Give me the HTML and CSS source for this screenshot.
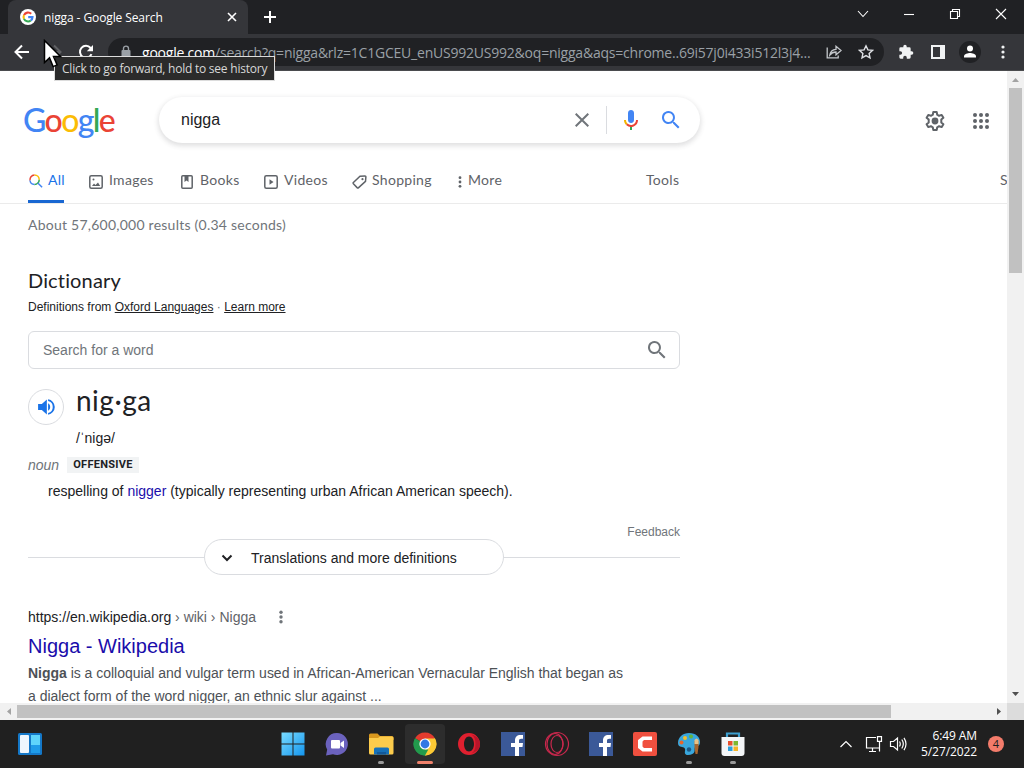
FILE: index.html
```html
<!DOCTYPE html>
<html lang="en">
<head>
  <meta charset="UTF-8">
  <meta name="viewport" content="width=device-width, initial-scale=1.0">
  <title>nigga - Google Search</title>
  <link rel="stylesheet" href="styles.css">
</head>
<body>
  <div class="tabstrip">
    <div class="tab">
      <svg class="favicon" width="16" height="16" viewBox="0 0 16 16" fill="none" stroke-width="2.1">
        <circle cx="8" cy="8" r="8" fill="#fff"/>
        <path d="M4 6.1A4.5 4.5 0 0 1 11.2 4.8" stroke="#ea4335"/>
        <path d="M4 6.1A4.5 4.5 0 0 0 4 9.9" stroke="#fbbc05"/>
        <path d="M4 9.9A4.5 4.5 0 0 0 10.8 11.5" stroke="#34a853"/>
        <path d="M10.8 11.5A4.5 4.5 0 0 0 12.5 8.1H8.2" stroke="#4285f4"/>
      </svg>
      <span class="tab-title">nigga - Google Search</span>
      <svg class="tab-close" width="10" height="10" viewBox="0 0 10 10" stroke="#fff" stroke-width="1.6"><path d="M1 1l8 8M9 1L1 9"/></svg>
    </div>
    <svg class="new-tab" width="12" height="12" viewBox="0 0 12 12" stroke="#fff" stroke-width="2"><path d="M6 0v12M0 6h12"/></svg>
    <div class="window-buttons">
      <svg width="12" height="12" viewBox="0 0 12 12"><path d="M1 3l5 5.5L11 3"/></svg>
      <svg width="12" height="12" viewBox="0 0 12 12"><path d="M1 6.5h10"/></svg>
      <svg width="12" height="12" viewBox="0 0 12 12"><path d="M1.5 3.5h7v7h-7zM3.5 3.5v-2h7v7h-2"/></svg>
      <svg width="12" height="12" viewBox="0 0 12 12"><path d="M1 1l10 10M11 1L1 11"/></svg>
    </div>
  </div>

  <div class="toolbar">
    <svg class="nav-back" width="16" height="16" viewBox="0 0 16 16" fill="none" stroke="#fff" stroke-width="2"><path d="M15 8H2M8 1.5L1.5 8 8 14.500"/></svg>
    <svg class="nav-forward" width="16" height="16" viewBox="0 0 16 16" fill="none" stroke="#606164" stroke-width="2"><path d="M1 8h13M8 1.500L14.500 8 8 14.500"/></svg>
    <svg class="nav-reload" width="16" height="16" viewBox="0 0 16 16" fill="none" stroke="#fff" stroke-width="2"><path d="M13.500 10.200A6 6 0 1 1 12.600 4L14 5.600"/><path d="M15 1v6.200H8.800z" fill="#fff" stroke="none"/></svg>
    <div class="omnibox">
      <svg class="lock" width="10" height="14" viewBox="0 0 10 14"><rect x="0.500" y="5" width="9" height="8" rx="1" fill="#9aa0a6"/><path d="M2.500 6V3.600a2.500 2.500 0 0 1 5 0V6" fill="none" stroke="#9aa0a6" stroke-width="1.400"/></svg>
      <span class="url"><span class="host">google.com</span>/search?q=nigga&amp;rlz=1C1GCEU_enUS992US992&amp;oq=nigga&amp;aqs=chrome..69i57j0i433i512l3j4...</span>
      <svg class="share" width="16" height="14" viewBox="0 0 16 14" fill="none" stroke="#c4c7cb" stroke-width="1.300"><path d="M1.200 2.500v10.300h11V10.500"/><path d="M3.800 10C4.300 6.500 6.500 4.500 10 4.300V1.300L15 5.600l-5 4.200V7C7.300 7 5.500 7.800 3.800 10z"/></svg>
      <svg class="star" width="16" height="16" viewBox="0 0 16 16" fill="none" stroke="#dfe1e5" stroke-width="1.400"><path d="M8 1.800l1.900 4.100 4.500.5-3.300 3 .9 4.400L8 11.600l-4 2.200.9-4.400-3.300-3 4.500-.5z"/></svg>
    </div>
    <svg class="ext" width="16" height="16" viewBox="0 0 24 24" fill="#f1f3f4"><path d="M20.500 11H19V7a2 2 0 0 0-2-2h-4V3.500a2.500 2.500 0 0 0-5 0V5H4a2 2 0 0 0-2 2v3.800h1.500a2.700 2.700 0 0 1 0 5.400H2V20a2 2 0 0 0 2 2h3.800v-1.500a2.700 2.700 0 0 1 5.400 0V22H17a2 2 0 0 0 2-2v-4h1.500a2.500 2.500 0 0 0 0-5z"/></svg>
    <svg class="panel" width="14" height="14" viewBox="0 0 14 14"><path fill="#f1f3f4" fill-rule="evenodd" d="M0 0h14v14H0zM2 2v10h7V2z"/></svg>
    <svg class="profile" width="22" height="22" viewBox="0 0 22 22"><circle cx="11" cy="11" r="11" fill="#202124"/><circle cx="11" cy="7.500" r="3" fill="#fff"/><path d="M5 16.500v-1.300c0-2 4-3.200 6-3.200s6 1.200 6 3.200v1.300z" fill="#fff"/></svg>
    <svg class="menu" width="4" height="14" viewBox="0 0 4 14" fill="#f1f3f4"><circle cx="2" cy="2" r="1.600"/><circle cx="2" cy="7" r="1.600"/><circle cx="2" cy="12" r="1.600"/></svg>
  </div>

  <div class="tooltip">Click to go forward, hold to see history</div>
  <svg class="cursor" width="20" height="32" viewBox="0 0 20 32"><path d="M1.500 1.500v22l5-4.600 3.600 8.700 4-1.700-3.600-8.400h7z" fill="#fff" stroke="#000" stroke-width="1.500"/></svg>

  <div class="viewport">
    <div class="page">
      <header class="search-header">
        <div class="logo"><span class="blue">G</span><span class="red">o</span><span class="yellow">o</span><span class="blue">g</span><span class="green">l</span><span class="red">e</span></div>
        <div class="search-box">
          <span class="query">nigga</span>
          <svg class="clear" width="14" height="14" viewBox="0 0 14 14" stroke="#70757a" stroke-width="2"><path d="M.7.7l12.600 12.600M13.300.7L.7 13.300"/></svg>
          <span class="divider"></span>
          <svg class="mic" width="24" height="24" viewBox="0 0 24 24"><path fill="#4285f4" d="M12 15c1.700 0 3-1.300 3-3V5c0-1.700-1.300-3-3-3S9 3.300 9 5v7c0 1.700 1.300 3 3 3z"/><path fill="#34a853" d="M11 18.100h2V22h-2z"/><path fill="#f4b400" d="M7 12H5c0 1.900.8 3.700 2.100 5l1.400-1.400C7.600 14.700 7 13.400 7 12z"/><path fill="#ea4335" d="M12 17c-1.400 0-2.600-.5-3.500-1.400L7.100 17A7 7 0 0 0 19 12h-2c0 2.800-2.200 5-5 5z"/></svg>
          <svg class="go" width="24" height="24" viewBox="0 0 24 24" fill="#4285f4"><path d="M15.500 14h-.8l-.3-.3A6.500 6.500 0 1 0 13.700 14.400l.3.300v.8l5 5 1.500-1.500zm-6 0a4.500 4.500 0 1 1 0-9 4.500 4.500 0 0 1 0 9z"/></svg>
        </div>
        <svg class="gear" width="24" height="24" viewBox="0 0 24 24"><path d="M10.300 3h3.400l.5 2.700 1.900 1.100 2.600-.9 1.700 2.900-2.100 1.800v2.800l2.100 1.800-1.700 2.900-2.600-.9-1.900 1.100-.5 2.700h-3.400l-.5-2.700-1.900-1.100-2.600.9-1.700-2.900 2.100-1.800v-2.800L3.600 8.800l1.700-2.900 2.600.9 1.900-1.100z" fill="none" stroke="#5f6368" stroke-width="2" stroke-linejoin="round"/><circle cx="12" cy="12" r="3.400" fill="#5f6368"/></svg>
        <svg class="apps" width="16" height="16" viewBox="0 0 16 16" fill="#5f6368"><circle cx="2" cy="2" r="2"/><circle cx="8" cy="2" r="2"/><circle cx="14" cy="2" r="2"/><circle cx="2" cy="8" r="2"/><circle cx="8" cy="8" r="2"/><circle cx="14" cy="8" r="2"/><circle cx="2" cy="14" r="2"/><circle cx="8" cy="14" r="2"/><circle cx="14" cy="14" r="2"/></svg>
      </header>

      <nav class="tabs">
        <a class="active">
          <svg width="16" height="16" viewBox="0 0 16 16" fill="none" stroke-width="1.500"><path d="M2 7.500A4.700 4.700 0 0 1 6.500 2" stroke="#ea4335"/><path d="M6.500 2A4.700 4.700 0 0 1 11.200 6.700" stroke="#fbbc05"/><path d="M2 7.500a4.700 4.700 0 0 0 4.500 4" stroke="#4285f4"/><path d="M6.500 11.500a4.700 4.700 0 0 0 4.700-4.800" stroke="#34a853"/><path d="M9.800 10l4.300 4.300" stroke="#4285f4"/></svg>
          <span>All</span>
        </a>
        <a class="t-images">
          <svg width="14" height="14" viewBox="0 0 14 14"><rect x=".8" y=".8" width="12.400" height="12.400" rx="1.500" fill="none" stroke="#5f6368" stroke-width="1.500"/><path d="M3 11l2-2.500 1.500 1.400L9 7.500l2.200 3.500z" fill="#5f6368"/><circle cx="4.500" cy="4.500" r="1" fill="#5f6368"/></svg>
          <span>Images</span>
        </a>
        <a class="t-books">
          <svg width="12" height="14" viewBox="0 0 12 14"><rect x=".8" y=".8" width="10.400" height="12.400" rx="1" fill="none" stroke="#5f6368" stroke-width="1.500"/><path d="M3.500 1h4v6l-2-1.500-2 1.500z" fill="#5f6368"/></svg>
          <span>Books</span>
        </a>
        <a class="t-videos">
          <svg width="14" height="14" viewBox="0 0 14 14"><rect x=".8" y=".8" width="12.400" height="12.400" rx="1.500" fill="none" stroke="#5f6368" stroke-width="1.500"/><path d="M5.500 4.200v5.600L9.500 7z" fill="#5f6368"/></svg>
          <span>Videos</span>
        </a>
        <a class="t-shopping">
          <svg width="15" height="14" viewBox="0 0 15 14"><path d="M8 1.300l5-.4q.9 0 .9.900l-.4 4.500L6.600 12.600q-.8.700-1.500 0L1.400 8.800q-.6-.7 0-1.400z" fill="none" stroke="#5f6368" stroke-width="1.500"/><circle cx="10.500" cy="4.200" r="1.100" fill="#5f6368"/></svg>
          <span>Shopping</span>
        </a>
        <a class="t-more">
          <svg width="4" height="12" viewBox="0 0 4 12" fill="#5f6368"><circle cx="2" cy="1.700" r="1.400"/><circle cx="2" cy="6" r="1.400"/><circle cx="2" cy="10.300" r="1.400"/></svg>
          <span>More</span>
        </a>
        <a class="t-tools">Tools</a>
        <a class="t-safe">S</a>
      </nav>

      <main class="results">
        <div class="stats">About 57,600,000 results (0.34 seconds)</div>

        <section class="dictionary">
          <h2>Dictionary</h2>
          <p class="source">Definitions from <u>Oxford Languages</u> <i>·</i> <u>Learn more</u></p>
          <div class="word-search">
            <span>Search for a word</span>
            <svg width="24" height="24" viewBox="0 0 24 24" fill="#70757a"><path d="M15.500 14h-.8l-.3-.3A6.500 6.500 0 1 0 13.700 14.400l.3.300v.8l5 5 1.500-1.500zm-6 0a4.500 4.500 0 1 1 0-9 4.500 4.500 0 0 1 0 9z"/></svg>
          </div>
          <div class="entry">
            <div class="speaker">
              <svg width="20" height="20" viewBox="0 0 24 24" fill="#1a73e8"><path d="M2.500 8.500v7H7l6 5.500V3L7 8.500z"/><path d="M14.500 7.500v9c1.700-.8 2.500-2.500 2.500-4.500s-.8-3.700-2.500-4.500zM14.500 2.700v2.200a7.300 7.300 0 0 1 0 14.200v2.200a9.400 9.400 0 0 0 0-18.600z"/></svg>
            </div>
            <div>
              <div class="headword">nig·ga</div>
              <div class="phonetic">/ˈniɡə/</div>
            </div>
          </div>
          <div class="pos"><em>noun</em><span class="label">OFFENSIVE</span></div>
          <p class="definition">respelling of <a>nigger</a> (typically representing urban African American speech).</p>
          <div class="feedback">Feedback</div>
          <div class="expand">
            <div class="expand-button">
              <svg width="12" height="8" viewBox="0 0 12 8" fill="none" stroke="#202124" stroke-width="2"><path d="M1.500 1.500L6 6l4.500-4.500"/></svg>
              <span>Translations and more definitions</span>
            </div>
          </div>
        </section>

        <article class="result">
          <div class="cite">
            <div><span>https://en.wikipedia.org</span> › wiki › Nigga</div>
            <svg width="4" height="14" viewBox="0 0 4 14" fill="#70757a"><circle cx="2" cy="2.200" r="1.700"/><circle cx="2" cy="7" r="1.700"/><circle cx="2" cy="11.800" r="1.700"/></svg>
          </div>
          <h3>Nigga - Wikipedia</h3>
          <p class="snippet"><b>Nigga</b> is a colloquial and vulgar term used in African-American Vernacular English that began as<br>a dialect form of the word nigger, an ethnic slur against ...</p>
        </article>
      </main>
    </div>
    <div class="vscroll">
      <svg width="7" height="4" viewBox="0 0 7 4"><path d="M0 4L3.500 0 7 4z" fill="#a3a3a3"/></svg>
      <div class="thumb"></div>
      <svg class="down" width="7" height="4" viewBox="0 0 7 4"><path d="M0 0l3.500 4L7 0z" fill="#505050"/></svg>
    </div>
  </div>

  <div class="hscroll">
    <svg width="4" height="7" viewBox="0 0 4 7"><path d="M4 0L0 3.500 4 7z" fill="#a3a3a3"/></svg>
    <div class="thumb"></div>
    <svg class="right" width="4" height="7" viewBox="0 0 4 7"><path d="M0 0l4 3.500L0 7z" fill="#505050"/></svg>
    <div class="corner"></div>
  </div>

  <footer class="taskbar">
    <svg class="widgets" width="24" height="22" viewBox="0 0 24 22"><rect width="24" height="22" rx="1.500" fill="#1478c8"/><rect x="2" y="2" width="9" height="18" rx="1" fill="#eef6fd"/><rect x="13" y="2" width="9" height="10" fill="#5fd4fb"/><rect x="13" y="12" width="9" height="8" fill="#1f9be8"/></svg>
    <div class="pinned">
      <div class="app">
        <svg width="24" height="24" viewBox="0 0 24 24"><defs><linearGradient id="win" gradientUnits="userSpaceOnUse" x1="0" y1="0" x2="24" y2="24"><stop offset="0" stop-color="#7bdcff"/><stop offset="1" stop-color="#1294ee"/></linearGradient></defs><path d="M.5.5h11v11H.5zM12.500.5h11v11h-11zM.5 12.500h11v11H.5zM12.500 12.500h11v11h-11z" fill="url(#win)"/></svg>
      </div>
      <div class="app">
        <svg width="24" height="24" viewBox="0 0 24 24"><path d="M12 1a11 11 0 1 1-4 21.300L1 23.500l1.200-6A11 11 0 0 1 12 1z" fill="#6b62bd"/><rect x="6" y="8" width="9" height="8.500" rx="1" fill="#fff"/><path d="M15.500 11L19 8.500V16l-3.500-2.500z" fill="#fff"/></svg>
      </div>
      <div class="app open">
        <svg width="26" height="24" viewBox="0 0 26 24"><path d="M1 3q0-1.500 1.500-1.500h7L12 4h12q1.500 0 1.500 1.500V8H1z" fill="#d9981e"/><path d="M1 6h9l2-1.500h12q1.500 0 1.500 1.500v15q0 1.500-1.500 1.500H2.500Q1 22.500 1 21z" fill="#fccc4c"/><path d="M6 22.500V17q0-1.500 1.500-1.500h12Q21 15.500 21 17v5.500z" fill="#1671b9"/><path d="M9 22.500V20h9v2.500z" fill="#12599a"/></svg>
      </div>
      <div class="app current">
        <svg width="24" height="24" viewBox="0 0 24 24"><path d="M12 12L2.100 6.300A11.400 11.400 0 0 1 21.900 6.300z" fill="#e33b2e"/><path d="M12 12l9.900-5.700A11.400 11.400 0 0 1 12 23.400z" fill="#fcc934"/><path d="M12 12v11.400A11.400 11.400 0 0 1 2.100 6.300z" fill="#229a4c"/><path d="M12 6.500h9.900A11.400 11.400 0 0 1 12 23.400l4.800-8.600z" fill="#fcc934"/><path d="M2.100 6.300l5.100 8.500L12 17.500h3.300L12 23.400A11.400 11.400 0 0 1 2.100 6.300z" fill="#229a4c"/><circle cx="12" cy="12" r="5.600" fill="#fff"/><circle cx="12" cy="12" r="4.400" fill="#3478e5"/></svg>
      </div>
      <div class="app">
        <svg width="24" height="24" viewBox="0 0 24 24"><path fill="#e0202f" fill-rule="evenodd" d="M12 1a11 11 0 0 1 0 22 11 11 0 0 1 0-22zm0 3.500c-3 0-5 3.500-5 7.500s2 7.500 5 7.500 5-3.500 5-7.500-2-7.500-5-7.500z"/><path d="M14.500 2.500c6 2 8.500 5.500 8.500 9.500s-2.500 7.500-8.500 9.500c3-2 4-5.500 4-9.500s-1-7.500-4-9.500z" fill="#b8152a"/></svg>
      </div>
      <div class="app">
        <svg width="24" height="24" viewBox="0 0 24 24"><rect width="24" height="24" fill="#3b5998"/><path d="M14 24v-9h-4v-4h4V8.500C14 5 16 3 19.500 3H22v3.800h-1.800c-1.700 0-2.200.7-2.200 2V11h4l-.5 4H18v9z" fill="#fff"/></svg>
      </div>
      <div class="app">
        <svg width="26" height="26" viewBox="0 0 26 26" fill="none" stroke="#c9284d" stroke-width="1.200"><circle cx="13" cy="13" r="11.500"/><ellipse cx="13" cy="13" rx="6" ry="8.500"/><ellipse cx="11" cy="13" rx="8" ry="10.500"/></svg>
      </div>
      <div class="app">
        <svg width="24" height="24" viewBox="0 0 24 24"><rect width="24" height="24" fill="#3b5998"/><path d="M14 24v-9h-4v-4h4V8.500C14 5 16 3 19.500 3H22v3.800h-1.800c-1.700 0-2.200.7-2.200 2V11h4l-.5 4H18v9z" fill="#fff"/></svg>
      </div>
      <div class="app">
        <svg width="24" height="24" viewBox="0 0 24 24"><rect width="24" height="24" rx="2" fill="#f0503f"/><path d="M19 4.500H9.500L5 8v8l4.500 3.500H19V16h-8l-1.500-1.500v-5L11 8h8z" fill="#fff"/></svg>
      </div>
      <div class="app open">
        <svg width="26" height="26" viewBox="0 0 26 26"><path d="M13 2c7 0 11 4 11 9 0 4-2 4-4 4.500s-1 3-1.500 5-3 3.500-6.500 3.500c-3 0-3.500-2-3-4s0-3.500-3-4-4-1.500-4-4C2 6 7 2 13 2z" fill="#39a7dd"/><circle cx="9" cy="7" r="2" fill="#f5c02c"/><circle cx="15" cy="5.500" r="2" fill="#64b43d"/><circle cx="5.500" cy="11.500" r="2" fill="#e7652b"/><circle cx="13" cy="18.500" r="2.200" fill="#1d5783"/><path d="M18.500 10h4v6l-1 7h-2l-1-7z" fill="#a8662e"/><path d="M18.500 9q2-3 4 0v4h-4z" fill="#e7c187"/></svg>
      </div>
      <div class="app open">
        <svg width="24" height="26" viewBox="0 0 24 26"><path d="M6 8V2.500h12V8" fill="none" stroke="#3d9fd0" stroke-width="2.200"/><path d="M.5 6h23v16q0 3-3 3h-17q-3 0-3-3z" fill="#f4f6f8"/><path d="M7 10h4.500v4.500H7z" fill="#e8502e"/><path d="M12.500 10H17v4.500h-4.500z" fill="#7db72f"/><path d="M7 15.500h4.500V20H7z" fill="#2c9fdc"/><path d="M12.500 15.500H17V20h-4.500z" fill="#f5b427"/></svg>
      </div>
    </div>
    <div class="tray">
      <svg width="14" height="8" viewBox="0 0 14 8"><path d="M1.500 7L7 1.500 12.500 7"/></svg>
      <svg class="net" width="18" height="16" viewBox="0 0 18 16"><path d="M11 1.500H1.500v10.500H14M4 15.500h7M7.500 12v3.500M12.500.7h4v4.600h-4zM14.500 5.500v10"/></svg>
      <svg class="vol" width="18" height="16" viewBox="0 0 18 16"><path d="M1.500 5.500h3l4-3.500v12l-4-3.500h-3zM10.500 5.500q1.500 2.500 0 5M12.800 3.500q3 4.500 0 9M15 1.800q4 6.200 0 12.400"/></svg>
      <div class="clock"><div>6:49 AM</div><div>5/27/2022</div></div>
      <div class="badge">4</div>
    </div>
  </footer>
</body>
</html>
```
FILE: styles.css
```css
* {
  box-sizing: border-box;
}
body {
  margin: 0;
  width: 1024px;
  height: 768px;
  overflow: hidden;
  font-family: "Liberation Sans", Arial, sans-serif;
  color: #202124;
  background: #fff;
}
svg {
  flex: none;
  display: block;
}
h2, h3, p {
  margin: 0;
  font-weight: normal;
}

/* browser window */
.tabstrip {
  display: flex;
  height: 34px;
  padding-left: 8px;
  background: #202124;
}
.tab {
  display: flex;
  align-items: center;
  width: 240px;
  height: 34px;
  padding: 0 11px 0 12px;
  border-radius: 8px 8px 0 0;
  background: #35363a;
  color: #fff;
  font: 12px "Open Sans", sans-serif;
}
.tab-title {
  flex: 1;
  margin-left: 8px;
  letter-spacing: -0.1px;
  white-space: nowrap;
}
.new-tab {
  margin: 11px 0 0 16px;
}
.window-buttons {
  display: flex;
  gap: 34px;
  margin: 8px 17px 0 auto;
}
.window-buttons svg {
  fill: none;
  stroke: #fff;
  stroke-width: 1.1;
}
.toolbar {
  display: flex;
  align-items: center;
  height: 37px;
  padding: 0 19px 0 14px;
  background: #35363a;
  border-bottom: 1px solid #4a4b4e;
}
.nav-forward {
  margin-left: 16px;
}
.nav-reload {
  margin-left: 16px;
}
.omnibox {
  display: flex;
  align-items: center;
  width: 776px;
  height: 28px;
  margin-left: 14px;
  padding: 0 10px 0 13px;
  border-radius: 14px;
  background: #202124;
  font: 14px "Open Sans", sans-serif;
  color: #9aa0a6;
}
.url {
  margin-left: 11px;
  width: 670px;
  white-space: nowrap;
  letter-spacing: -0.22px;
}
.host {
  color: #fff;
}
.share {
  margin-left: 14px;
}
.star {
  margin-left: 16px;
}
.ext {
  margin-left: 14px;
}
.panel {
  margin-left: 17px;
}
.profile {
  margin-left: 14px;
}
.menu {
  margin-left: auto;
}
.tooltip {
  position: absolute;
  left: 54px;
  top: 56px;
  width: 221px;
  height: 25px;
  padding-left: 7px;
  border: 1px solid #dcdcdc;
  background: #2b2b2b;
  color: #d8d8d8;
  font: 12px/23px "Open Sans", sans-serif;
  letter-spacing: -0.23px;
  white-space: nowrap;
}
.cursor {
  position: absolute;
  left: 43px;
  top: 39px;
}

.viewport {
  display: flex;
  height: 632px;
}
.page {
  width: 1007px;
  height: 632px;
  overflow: hidden;
}
.vscroll {
  display: flex;
  flex-direction: column;
  align-items: center;
  width: 17px;
  padding: 7px 0;
  background: #f1f1f1;
}
.vscroll .thumb {
  width: 13px;
  height: 185px;
  margin-top: 6px;
  background: #c1c1c1;
}
.down {
  margin-top: auto;
}
.hscroll {
  display: flex;
  align-items: center;
  height: 17px;
  padding-left: 7px;
  background: #f1f1f1;
}
.hscroll .thumb {
  width: 874px;
  height: 13px;
  margin-left: 6px;
  background: #c1c1c1;
}
.right {
  margin-left: auto;
}
.corner {
  width: 17px;
  height: 17px;
  margin-left: 6px;
  background: #dcdcdc;
}

/* search header */
.search-header {
  display: flex;
  align-items: flex-start;
  height: 89px;
  padding: 26px 18px 0 23px;
}
.logo {
  width: 93px;
  margin-top: 3px;
  font: 500 32px/40px Lato, sans-serif;
  letter-spacing: -1.6px;
  white-space: nowrap;
}
.blue {
  color: #4285f4;
}
.red {
  color: #ea4335;
}
.yellow {
  color: #fbbc05;
}
.green {
  color: #34a853;
}
.search-box {
  display: flex;
  align-items: center;
  width: 541px;
  height: 46px;
  margin-left: 43px;
  padding: 0 17px 0 22px;
  border-radius: 23px;
  box-shadow: 0 2px 5px 1px rgba(64, 60, 67, 0.16);
}
.query {
  flex: 1;
  font-size: 16px;
}
.divider {
  width: 1px;
  height: 28px;
  margin-left: 17px;
  background: #dadce0;
}
.mic {
  margin-left: 12px;
}
.go {
  margin-left: 16px;
}
.gear {
  margin: 12px 0 0 auto;
}
.apps {
  margin: 16px 0 0 26px;
}

.tabs {
  display: flex;
  height: 44px;
  padding-left: 28px;
  border-bottom: 1px solid #ebebeb;
  font: 14px/20px Lato, sans-serif;
  letter-spacing: 0.3px;
  color: #5f6368;
}
.tabs a {
  display: flex;
  flex: none;
  align-items: center;
  height: 43px;
  padding-bottom: 4px;
  white-space: nowrap;
}
.tabs a svg {
  margin-top: 4px;
}
.tabs a span {
  margin-left: 6px;
}
.tabs .active {
  width: 36px;
  padding: 0 0 1px;
  border-bottom: 3px solid #1967d2;
  color: #1a73e8;
}
.tabs .active svg {
  margin-top: 2px;
}
.tabs .active span {
  margin-left: 4px;
}
.tabs .t-images {
  width: 92px;
  margin-left: 25px;
}
.tabs .t-books {
  width: 83px;
}
.tabs .t-books span {
  margin-left: 7px;
}
.tabs .t-videos {
  width: 88px;
}
.tabs .t-shopping {
  width: 106px;
}
.tabs .t-shopping span {
  margin-left: 5px;
}
.tabs .t-more {
  width: 188px;
}
.tabs .t-tools {
  width: 354px;
}

/* results */
.results {
  width: 680px;
  padding-left: 28px;
}
.stats {
  height: 63px;
  padding-top: 11px;
  font: 14px/20px Lato, sans-serif;
  letter-spacing: 0.24px;
  color: #70757a;
}
.dictionary h2 {
  font: 20px/26px Lato, sans-serif;
  letter-spacing: 0.15px;
}
.source {
  height: 38px;
  padding-top: 6px;
  font-size: 12px;
  line-height: 16px;
}
.source i {
  font-style: normal;
  color: #70757a;
}
.word-search {
  display: flex;
  align-items: center;
  justify-content: space-between;
  height: 38px;
  padding: 0 10px 0 14px;
  border: 1px solid #dadce0;
  border-radius: 6px;
  font-size: 14px;
  color: #70757a;
}
.entry {
  display: flex;
  height: 83px;
  padding-top: 13px;
}
.speaker {
  display: flex;
  align-items: center;
  justify-content: center;
  width: 36px;
  height: 36px;
  margin: 7px 12px 0 0;
  border: 1px solid #dadce0;
  border-radius: 50%;
}
.headword {
  font: 28px/36px Lato, sans-serif;
  letter-spacing: 0.5px;
}
.phonetic {
  margin-top: 12px;
  font-size: 14px;
  line-height: 16px;
}
.pos {
  display: flex;
  align-items: center;
  height: 25px;
  font-size: 14px;
  color: #70757a;
}
.label {
  margin-left: 8px;
  padding: 0 6px;
  background: #f1f3f4;
  color: #202124;
  font: bold 11px/16px Roboto, sans-serif;
  letter-spacing: 0.3px;
}
.definition {
  padding-left: 20px;
  font-size: 14px;
  line-height: 28px;
}
.definition a {
  color: #1a0dab;
}
.feedback {
  height: 34px;
  padding-top: 19px;
  text-align: right;
  font-size: 12px;
  line-height: 16px;
  color: #70757a;
}
.expand {
  display: flex;
  align-items: center;
  height: 36px;
}
.expand::before, .expand::after {
  content: "";
  flex: 1;
  height: 1px;
  background: #dadce0;
}
.expand-button {
  display: flex;
  align-items: center;
  width: 300px;
  height: 36px;
  padding: 1px 0 0 16px;
  border: 1px solid #dadce0;
  border-radius: 18px;
  font-size: 14px;
}
.expand-button span {
  margin-left: 18px;
}

.result {
  padding-top: 32px;
}
.cite {
  display: flex;
  align-items: center;
  height: 20px;
  font-size: 14px;
  color: #5f6368;
}
.cite span {
  color: #202124;
}
.cite svg {
  margin-left: 23px;
}
.result h3 {
  height: 35px;
  padding-top: 6px;
  font-size: 20px;
  line-height: 26px;
  color: #1a0dab;
}
.snippet {
  font-size: 14px;
  line-height: 23px;
  letter-spacing: -0.02px;
  color: #4d5156;
  white-space: nowrap;
}

/* taskbar */
.taskbar {
  display: flex;
  align-items: center;
  height: 48px;
  padding: 0 20px 0 18px;
  background: #202020;
  color: #fff;
  font: 12px/16px "Open Sans", sans-serif;
}
.pinned {
  display: flex;
  gap: 4px;
  margin-left: 231px;
}
.app {
  position: relative;
  display: flex;
  align-items: center;
  justify-content: center;
  width: 40px;
  height: 40px;
  border-radius: 4px;
}
.current {
  background: #2d2d2d;
}
.open::after, .current::after {
  content: "";
  position: absolute;
  bottom: 0;
  left: 17px;
  width: 6px;
  height: 3px;
  border-radius: 2px;
  background: #9a9a9a;
}
.current::after {
  left: 12px;
  width: 16px;
  background: #f0826c;
}
.tray {
  display: flex;
  align-items: center;
  margin-left: auto;
}
.tray svg {
  fill: none;
  stroke: #fff;
  stroke-width: 1.2;
}
.net {
  margin-left: 12px;
}
.vol {
  margin-left: 6px;
}
.clock {
  width: 70px;
  text-align: right;
  letter-spacing: -0.1px;
}
.badge {
  width: 16px;
  height: 16px;
  margin-left: 11px;
  border-radius: 50%;
  background: #f47c6b;
  color: #202020;
  font-size: 11px;
  text-align: center;
}
```
